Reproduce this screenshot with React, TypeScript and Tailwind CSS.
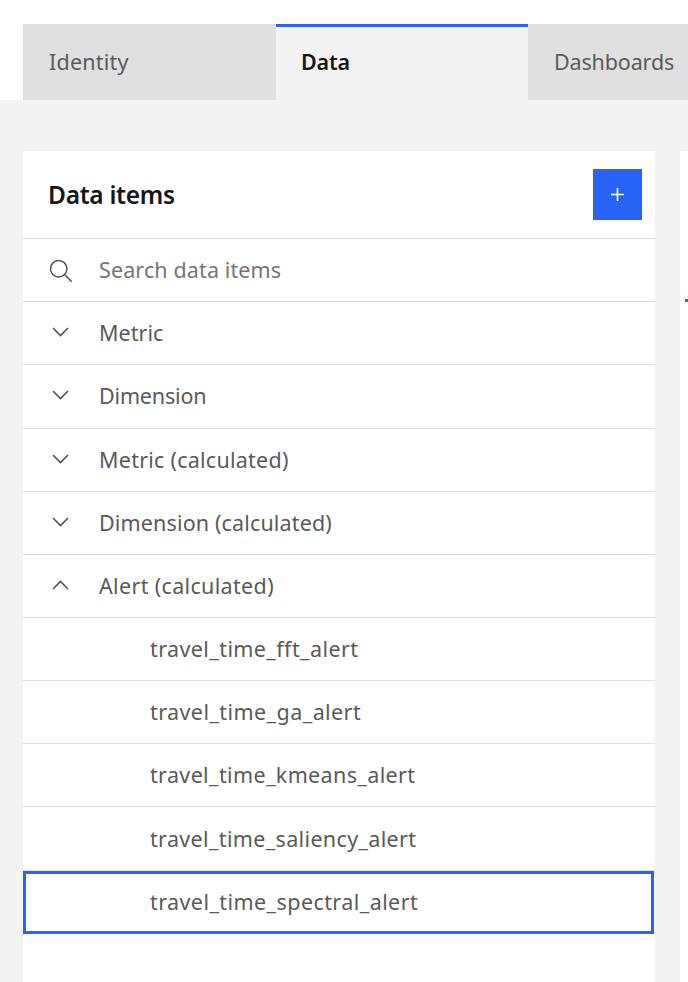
type Row = { label: string; spacing: string; height: string; open?: boolean };

const groups: Row[] = [
  { label: "Metric", spacing: "tracking-[0.05px]", height: "h-[63px]" },
  { label: "Dimension", spacing: "tracking-[-0.17px]", height: "h-16 pb-px" },
  { label: "Metric (calculated)", spacing: "tracking-[0.25px]", height: "h-[63px]" },
  { label: "Dimension (calculated)", spacing: "tracking-[0.15px]", height: "h-[63px]" },
  { label: "Alert (calculated)", spacing: "tracking-[0.34px]", height: "h-[63px]", open: true },
];

const alerts: Row[] = [
  { label: "travel_time_fft_alert", spacing: "tracking-[0.4px]", height: "h-[63px]" },
  { label: "travel_time_ga_alert", spacing: "tracking-[0.42px]", height: "h-[63px]" },
  { label: "travel_time_kmeans_alert", spacing: "tracking-[0.36px]", height: "h-[63px]" },
  { label: "travel_time_saliency_alert", spacing: "tracking-[0.34px]", height: "h-16" },
];

function Chevron({ open }: { open?: boolean }) {
  return (
    <svg width="18" height="10" viewBox="0 0 18 10" fill="none" stroke="#525252" strokeWidth="1.5">
      <path d={open ? "M1 9 8.5 1.4 16 9" : "M1 1 8.5 8.6 16 1"} />
    </svg>
  );
}

export default function App() {
  return (
    <div className="flex h-[982px] w-[688px] flex-col overflow-hidden bg-[#f3f3f3] font-['Noto_Sans',sans-serif] text-[21.5px] leading-[30px] text-[#5a5a5a]">
      <nav className="flex h-[100px] shrink-0 bg-white pt-6">
        <div className="w-[23px] shrink-0" />
        <div className="flex w-[253px] shrink-0 items-center bg-[#e0e0e0] pl-[26px] tracking-[0.2px]">Identity</div>
        <div className="flex w-[252px] shrink-0 items-center border-t-[3px] border-[#2663f6] bg-[#f3f3f3] pb-[3px] pl-[25px] font-semibold tracking-[-0.15px] text-[#161616]">Data</div>
        <div className="flex w-[160px] shrink-0 items-center bg-[#e0e0e0] pl-[26px] tracking-[-0.15px] whitespace-nowrap">Dashboards</div>
      </nav>
      <main className="flex grow gap-[25px] pt-[51px] pl-[23px]">
        <section className="w-[632px] shrink-0 bg-white">
          <header className="flex h-[88px] items-center justify-between border-b border-[#e0e0e0] pr-[13px] pl-[25px]">
            <h2 className="text-[24.5px] font-semibold tracking-[-0.3px] text-[#161616]">Data items</h2>
            <button className="flex h-[51px] w-[49px] items-center justify-center bg-[#2663f6]">
              <svg width="13" height="13" viewBox="0 0 13 13" stroke="white" strokeWidth="1.6"><path d="M6.5 0V13M0 6.5H13" /></svg>
            </button>
          </header>
          <div className="flex h-[63px] items-center border-b border-[#e0e0e0] tracking-[0.12px] text-[#757575]">
            <div className="mr-px flex w-[75px] justify-center pt-px">
              <svg width="24" height="24" viewBox="0 0 24 24" fill="none" stroke="#525252" strokeWidth="1.5"><circle cx="9.7" cy="9.7" r="8.2" /><path d="m15.5 15.5 7.3 7.2" /></svg>
            </div>
            Search data items
          </div>
          {groups.map((g) => (
            <div key={g.label} className={`flex items-center border-b border-[#e0e0e0] ${g.height} ${g.spacing}`}>
              <div className="mr-px flex w-[75px] justify-center pb-[3px]"><Chevron open={g.open} /></div>
              {g.label}
            </div>
          ))}
          {alerts.map((a) => (
            <div key={a.label} className={`flex items-center border-b border-[#e0e0e0] pl-[127px] ${a.height} ${a.spacing}`}>{a.label}</div>
          ))}
          <div className="flex h-[63px] border-b border-[#e0e0e0]">
            <div className="flex h-[63px] w-[631px] items-center border-[3px] border-[#2663f6] pb-px pl-[124px] tracking-[0.42px]">travel_time_spectral_alert</div>
          </div>
        </section>
        <aside className="grow bg-white pt-[148px] pl-[5px]"><div className="h-[3px] bg-[#2663f6]" /></aside>
      </main>
    </div>
  );
}
